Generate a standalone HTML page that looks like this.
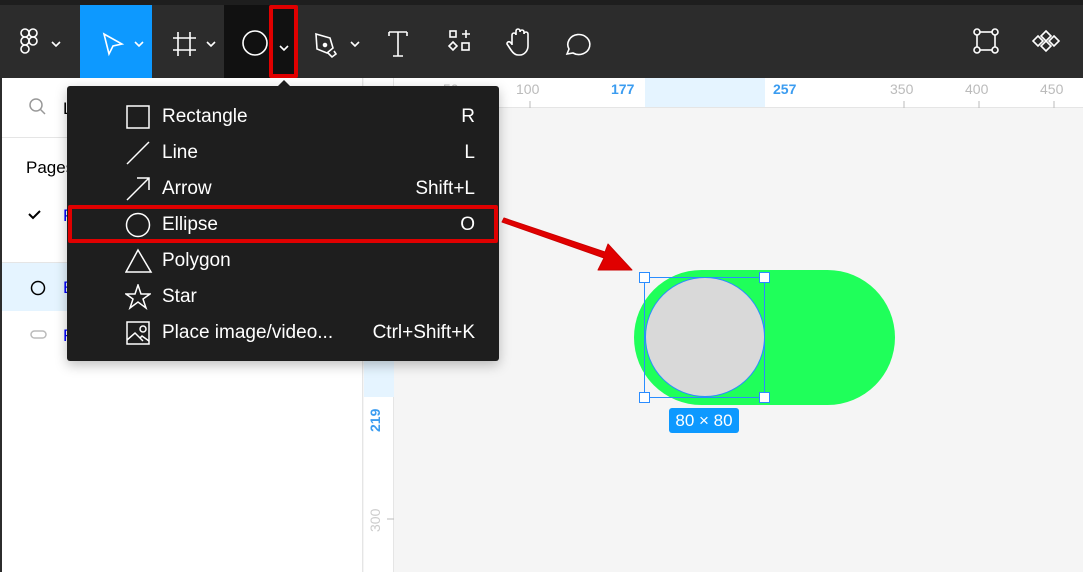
<!DOCTYPE html>
<html><head><meta charset="utf-8"><style>
*{margin:0;padding:0;box-sizing:border-box}
body{width:1083px;height:572px;overflow:hidden;position:relative;background:#f5f5f5;font-family:"Liberation Sans",sans-serif}
.abs{position:absolute}
.mi{position:absolute;left:0;width:432px;height:36px;color:#fff;font-size:19px}
.mi .t{position:absolute;left:95px;top:8px}
.mi .k{position:absolute;right:24px;top:8px}
.mi svg{position:absolute;left:58px;top:6px}
</style></head><body>
<div class="abs" style="left:0;top:0;width:1083px;height:5px;background:#1e1e1e"></div>
<div class="abs" style="left:0;top:5px;width:1083px;height:73px;background:#2c2c2c"></div>
<div class="abs" style="left:80px;top:5px;width:72px;height:73px;background:#0d99ff"></div>
<div class="abs" style="left:224px;top:5px;width:73px;height:73px;background:#111"></div>
<div class="abs" style="left:269px;top:5px;width:29px;height:73px;border:4px solid #e00000;border-radius:2px"></div>
<svg class="abs" style="left:0;top:5px" width="1083" height="73" fill="none" stroke="#fff" stroke-width="1.6">
<g transform="translate(21,24)"><rect x="0" y="0" width="8" height="8" rx="4"/><rect x="8" y="0" width="8" height="8" rx="4"/><rect x="0" y="8" width="8" height="8" rx="4"/><circle cx="12" cy="12" r="4"/><rect x="0" y="16" width="8" height="8" rx="4"/></g>
<path d="M52 37l4 4 4-4M135 37l4 4 4-4M207 37l4 4 4-4M280 41l4 4 4-4M351 37l4 4 4-4"/>
<path d="M104 29l5 20 4-8 9-2z"/>
<path d="M178 27v24M190 27v24M173 33h23M173 45h23"/>
<circle cx="255" cy="38" r="12"/>
<path d="M316 29l14 4 3 10 -6 5 -10-4z M328 48l4 4 4-3 -2-3" /><circle cx="325" cy="40" r="1.5" fill="#fff"/>
<path d="M389 27h18M398 27v24M393 51h10M389 27v4M407 27v4"/>
<rect x="450" y="26" width="6" height="6"/><path d="M462 29h8M466 25v8"/><path d="M453 37l4 4-4 4-4-4z"/><rect x="462" y="38" width="7" height="7"/>
<path d="M512 40v-10a2 2 0 014 0v-4a2 2 0 014 0v1a2 2 0 014 0v2a2 2 0 014 0v12c0 5-4 9-8 9h-2c-3 0-5-2-7-5l-4-6a2 2 0 013-2l2 2"/>
<path d="M567 49l2-5a11 10 0 1 1 4 4z"/>
<rect x="977" y="27" width="18" height="18"/><g fill="#2c2c2c"><circle cx="977" cy="27" r="3"/><circle cx="995" cy="27" r="3"/><circle cx="977" cy="45" r="3"/><circle cx="995" cy="45" r="3"/></g>
<g><path d="M1046 26l5 5-5 5-5-5zM1046 36l5 5-5 5-5-5zM1038 31l5 5-5 5-5-5zM1054 31l5 5-5 5-5-5z"/></g>
</svg>
<div class="abs" style="left:0;top:78px;width:363px;height:494px;background:#fff;border-left:2px solid #2c2c2c;border-right:1px solid #e5e5e5"></div>
<div class="abs" style="left:2px;top:137px;width:361px;height:1px;background:#e5e5e5"></div>
<div class="abs" style="left:2px;top:262px;width:361px;height:1px;background:#e5e5e5"></div>
<div class="abs" style="left:2px;top:263px;width:361px;height:48px;background:#e5f4ff"></div>
<svg class="abs" style="left:0;top:78px" width="120" height="300" fill="none" stroke="#999" stroke-width="1.5">
<circle cx="36" cy="27" r="6"/><path d="M40 31l5 5"/>
<path d="M29 136l4 4 7-7" stroke="#000" stroke-width="2"/>
<circle cx="38" cy="210" r="6.5" stroke="#000"/>
<rect x="31" y="253" width="15" height="7" rx="3.5" stroke="#bbb"/>
</svg>
<div class="abs" style="left:26px;top:158px;font-size:17px;color:#000">Pages</div>
<div class="abs" style="left:63px;top:99px;font-size:17px;color:#000">L</div>
<div class="abs" style="left:63px;top:206px;font-size:17px;color:#00f">P</div>
<div class="abs" style="left:63px;top:278px;font-size:17px;color:#00f">E</div>
<div class="abs" style="left:63px;top:326px;font-size:17px;color:#00f">F</div>
<div class="abs" style="left:364px;top:78px;width:719px;height:30px;background:#fff;border-bottom:1px solid #e5e5e5"></div>
<div class="abs" style="left:645px;top:78px;width:120px;height:29px;background:#e5f4ff"></div>
<div class="abs" style="left:364px;top:78px;width:30px;height:494px;background:#fff;border-right:1px solid #e5e5e5"></div>
<div class="abs" style="left:364px;top:277px;width:30px;height:120px;background:#e5f4ff"></div>
<div class="abs" style="left:0;top:0;font-size:14px;color:#bbb">
<span class="abs" style="left:443px;top:81px">50</span>
<span class="abs" style="left:516px;top:81px">100</span>
<span class="abs" style="left:611px;top:81px;color:#3b9cf0;font-weight:bold">177</span>
<span class="abs" style="left:773px;top:81px;color:#3b9cf0;font-weight:bold">257</span>
<span class="abs" style="left:890px;top:81px">350</span>
<span class="abs" style="left:965px;top:81px">400</span>
<span class="abs" style="left:1040px;top:81px">450</span>
</div>
<svg class="abs" style="left:0;top:0" width="1083" height="572" stroke="#bbb">
<path d="M530 101v7M904 101v7M979 101v7M1054 101v7M387 519h7"/>
</svg>
<div class="abs" style="left:367px;font-size:14px;color:#3b9cf0;font-weight:bold;transform:rotate(-90deg);transform-origin:0 0;top:432px">219</div>
<div class="abs" style="left:367px;top:532px;font-size:14px;color:#ccc;transform:rotate(-90deg);transform-origin:0 0">300</div>
<div class="abs" style="left:634px;top:270px;width:261px;height:135px;border-radius:68px;background:#1fff5a"></div>
<div class="abs" style="left:645px;top:277px;width:120px;height:120px;border-radius:50%;background:#d9d9d9;border:1.5px solid #2a8cff"></div>
<div class="abs" style="left:644px;top:277px;width:121px;height:121px;border:1.5px solid #2a8cff"></div>
<div class="abs" style="left:639px;top:272px;width:11px;height:11px;background:#fff;border:1.5px solid #2a8cff"></div>
<div class="abs" style="left:759px;top:272px;width:11px;height:11px;background:#fff;border:1.5px solid #2a8cff"></div>
<div class="abs" style="left:639px;top:392px;width:11px;height:11px;background:#fff;border:1.5px solid #2a8cff"></div>
<div class="abs" style="left:759px;top:392px;width:11px;height:11px;background:#fff;border:1.5px solid #2a8cff"></div>
<div class="abs" style="left:669px;top:408px;width:70px;height:25px;background:#0d99ff;border-radius:3px;color:#fff;font-size:17px;text-align:center;line-height:25px">80 × 80</div>
<div class="abs" style="left:277px;top:80px;width:0;height:0;border-left:7px solid transparent;border-right:7px solid transparent;border-bottom:7px solid #1e1e1e"></div>
<div class="abs" style="left:67px;top:86px;width:432px;height:275px;background:#1e1e1e;border-radius:3px;box-shadow:0 4px 12px rgba(0,0,0,.25)">
<div class="mi" style="top:12px"><svg width="26" height="26" fill="none" stroke="#fff" stroke-width="1.5"><rect x="2" y="2" width="22" height="22"/></svg><span class="t">Rectangle</span><span class="k">R</span></div>
<div class="mi" style="top:48px"><svg width="26" height="26" fill="none" stroke="#fff" stroke-width="1.5"><path d="M2 24L24 2"/></svg><span class="t">Line</span><span class="k">L</span></div>
<div class="mi" style="top:84px"><svg width="26" height="26" fill="none" stroke="#fff" stroke-width="1.5"><path d="M2 24L24 2M12 2h12v12"/></svg><span class="t">Arrow</span><span class="k">Shift+L</span></div>
<div class="mi" style="top:120px"><svg width="26" height="26" fill="none" stroke="#fff" stroke-width="1.5"><circle cx="13" cy="13" r="11.5"/></svg><span class="t">Ellipse</span><span class="k">O</span></div>
<div class="mi" style="top:156px"><svg width="28" height="26" fill="none" stroke="#fff" stroke-width="1.5"><path d="M13 2L1 24h25z"/></svg><span class="t">Polygon</span><span class="k"></span></div>
<div class="mi" style="top:192px"><svg width="26" height="26" fill="none" stroke="#fff" stroke-width="1.5"><path d="M13 1l3 9h9l-7 5 3 9-8-6-8 6 3-9-7-5h9z"/></svg><span class="t">Star</span></div>
<div class="mi" style="top:228px"><svg width="26" height="26" fill="none" stroke="#fff" stroke-width="1.5"><rect x="2" y="2" width="22" height="22"/><path d="M2 20l8-7 8 8M15 18l2-2 7 5"/><circle cx="18" cy="9" r="3"/></svg><span class="t">Place image/video...</span><span class="k">Ctrl+Shift+K</span></div>
</div>
<div class="abs" style="left:68px;top:205px;width:430px;height:38px;border:4px solid #e00000;border-radius:2px"></div>
<svg class="abs" style="left:0;top:0" width="1083" height="572">
<path d="M502 222L604 258L598 270L632 270L608 244L605 252L504 218Z" fill="#e00000" stroke="#c00" stroke-width="1" stroke-linejoin="round"/>
</svg>
</body></html>
